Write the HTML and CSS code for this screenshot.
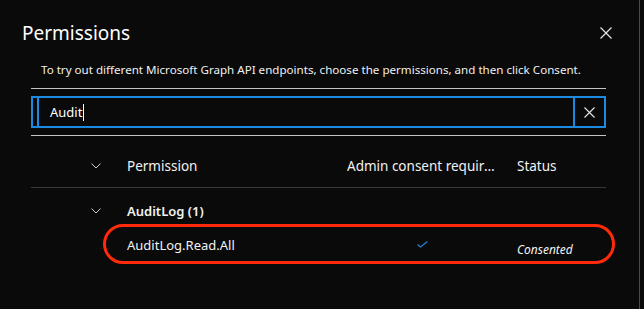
FILE: index.html
```html
<!DOCTYPE html>
<html lang="en">
<head><meta charset="UTF-8"/><meta name="viewport" content="width=device-width, initial-scale=1.0"/>
<title>Permissions</title>
<link rel="stylesheet" href="styles.css">
</head><body>
<div class="panel">
 <div class="head">
  <h1>Permissions</h1>
  <button class="close" aria-label="Close"><svg width="12" height="12" viewBox="0 0 12 12"><path d="M0.5 0.5L11.5 11.5M11.5 0.5L0.5 11.5" stroke="#e6e6e6" stroke-width="1.2"/></svg></button>
 </div>
 <div class="body">
  <p class="intro">To try out different Microsoft Graph API endpoints, choose the permissions, and then click Consent.</p>
  <div class="search-wrap">
   <div class="search">
    <span class="bar"></span>
    <div class="field"><span class="val">Audit</span><span class="caret"></span></div>
    <button class="clear" aria-label="Clear"><svg width="11" height="11" viewBox="0 0 11 11"><path d="M0.5 0.5L10.5 10.5M10.5 0.5L0.5 10.5" stroke="#e6e6e6" stroke-width="1.1"/></svg></button>
   </div>
  </div>
  <div class="grid">
   <div class="row hdr">
    <span class="chev"><svg width="10" height="6" viewBox="0 0 10 6"><path d="M0.5 0.5L5 5L9.5 0.5" fill="none" stroke="#d0d0d0" stroke-width="1"/></svg></span>
    <span>Permission</span>
    <span class="trunc">Admin consent required</span>
    <span>Status</span>
   </div>
   <div class="row grp">
    <span class="chev"><svg width="10" height="6" viewBox="0 0 10 6"><path d="M0.5 0.5L5 5L9.5 0.5" fill="none" stroke="#d0d0d0" stroke-width="1"/></svg></span>
    <span>AuditLog (1)</span>
   </div>
   <div class="row item">
    <span></span>
    <span>AuditLog.Read.All</span>
    <span class="check"><svg width="11" height="7" viewBox="0 0 11 7"><path d="M0.5 3.5L3.5 6L10.5 0.5" fill="none" stroke="#2a7fd0" stroke-width="1.3"/></svg></span>
    <span class="state">Consented</span>
    <div class="ring"></div>
   </div>
  </div>
 </div>
</div>
</body></html>
```

FILE: styles.css
```css
body{margin:0;background:#0a0a0a;font-family:"Segoe UI","Noto Sans",sans-serif;color:#f2f2f2;}
.panel{width:640px;height:309px;border-right:1px solid #4a4a4a;box-sizing:border-box;}
.head{display:flex;align-items:center;justify-content:space-between;padding:20px 27px 0 22px;height:26px;}
.head h1{margin:0;font-size:19px;font-weight:400;color:#fff;}
.close{background:none;border:none;padding:0;width:12px;height:12px;display:flex;}
.body{padding:0 33px 0 31px;}
.intro{margin:16px 0 0 10px;font-size:11.6px;line-height:16px;color:#f0f0f0;white-space:nowrap;}
.search-wrap{margin-top:10px;border-top:1px solid #c4c4c4;border-bottom:1px solid #c4c4c4;padding:7px 0;}
.search{display:flex;height:28px;border:2px solid #1c8ae0;}
.search .bar{width:4px;border-right:2px solid #1c8ae0;}
.field{flex:1;display:flex;align-items:center;padding-left:11px;font-size:13px;color:#fff;}
.caret{width:1px;height:17px;background:#fff;margin-left:1px;}
.clear{width:31px;border:none;border-left:2px solid #1c8ae0;background:none;padding:0;display:flex;align-items:center;justify-content:center;}
.grid{font-size:13px;}
.row{display:grid;grid-template-columns:96px 220px 170px 90px;align-items:center;position:relative;box-sizing:border-box;}
.row>span{white-space:nowrap;}
.chev{display:flex;padding-left:60px;}
.hdr{height:52px;padding-top:8px;border-bottom:1px solid #383838;font-size:13.5px;}
.grp{height:43px;padding-top:2px;font-weight:600;}
.item{height:24px;}
.trunc{overflow:hidden;text-overflow:ellipsis;width:150px;}
.check{display:flex;justify-content:center;width:150px;}
.state{font-style:italic;font-size:12px;padding-top:10px;}
.ring{position:absolute;left:72px;top:-7px;width:506px;height:34px;border:3px solid #ff2a0a;border-radius:21px;}
```
